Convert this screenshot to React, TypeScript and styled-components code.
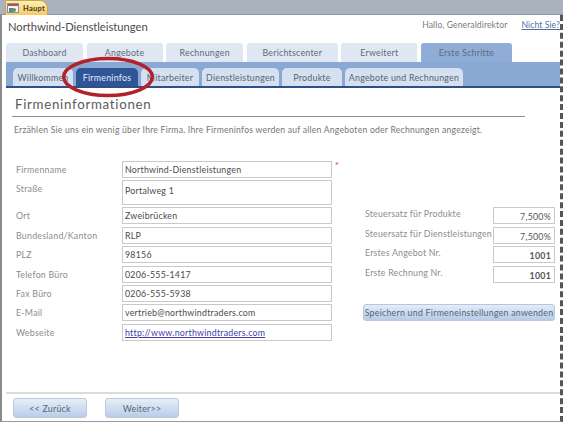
import React from 'react';
import styled, { createGlobalStyle } from 'styled-components';

const GlobalStyle = createGlobalStyle`
  html, body {
    margin: 0;
    padding: 0;
    background: #ffffff;
  }
  * {
    box-sizing: border-box;
  }
`

const mainTabs = [
  { label: 'Dashboard', width: 77 },
  { label: 'Angebote', width: 76 },
  { label: 'Rechnungen', width: 77 },
  { label: 'Berichtscenter', width: 91 },
  { label: 'Erweitert', width: 76 },
  { label: 'Erste Schritte', width: 91, active: true },
]

const subTabs = [
  { label: 'Willkommen', width: 60 },
  { label: 'Firmeninfos', width: 62, active: true },
  { label: 'Mitarbeiter', width: 58 },
  { label: 'Dienstleistungen', width: 77 },
  { label: 'Produkte', width: 60 },
  { label: 'Angebote und Rechnungen', width: 118 },
]

const companyFields = [
  { label: 'Firmenname', value: 'Northwind-Dienstleistungen', required: true },
  { label: 'Straße', value: 'Portalweg 1', tall: true },
  { label: 'Ort', value: 'Zweibrücken' },
  { label: 'Bundesland/Kanton', value: 'RLP' },
  { label: 'PLZ', value: '98156' },
  { label: 'Telefon Büro', value: '0206-555-1417' },
  { label: 'Fax Büro', value: '0206-555-5938' },
  { label: 'E-Mail', value: 'vertrieb@northwindtraders.com' },
  { label: 'Webseite', value: 'http://www.northwindtraders.com', link: true },
]

const taxFields = [
  { label: 'Steuersatz für Produkte', value: '7,500%' },
  { label: 'Steuersatz für Dienstleistungen', value: '7,500%' },
  { label: 'Erstes Angebot Nr.', value: '1001', bold: true },
  { label: 'Erste Rechnung Nr.', value: '1001', bold: true },
]

export default function App() {
  return (
    <Page>
      <GlobalStyle />
      <TopBar>
        <DocTab>
          <svg width="12" height="10" viewBox="0 0 12 10">
            <rect x="0.5" y="0.5" width="11" height="9" fill="#f4f6fa" stroke="#8c8f96" />
            <rect x="1" y="1" width="10" height="2" fill="#c0504d" />
            <rect x="2" y="5" width="4" height="4" fill="#4f81bd" />
            <circle cx="7" cy="7" r="2" fill="#6a9a4b" />
          </svg>
          Haupt
        </DocTab>
      </TopBar>
      <Body>
        <Header>
          <AppTitle>Northwind-Dienstleistungen</AppTitle>
          <Greeting>Hallo, Generaldirektor</Greeting>
          <NotYou>Nicht Sie?</NotYou>
        </Header>
        <MainTabs>
          {mainTabs.map((tab) => (
            <MainTab key={tab.label} $width={tab.width} $active={tab.active}>{tab.label}</MainTab>
          ))}
        </MainTabs>
        <SubBar>
          {subTabs.map((tab) => (
            <SubTab key={tab.label} $width={tab.width} $active={tab.active}>{tab.label}</SubTab>
          ))}
        </SubBar>
        <Content>
          <Heading>Firmeninformationen</Heading>
          <Intro>Erzählen Sie uns ein wenig über Ihre Firma. Ihre Firmeninfos werden auf allen Angeboten oder Rechnungen angezeigt.</Intro>
          <FormArea>
            <CompanyColumn>
              {companyFields.map((field) => (
                <Row key={field.label}>
                  <Label>{field.label}</Label>
                  <Input $tall={field.tall}>
                    {field.link ? <WebLink>{field.value}</WebLink> : field.value}
                  </Input>
                  {field.required && <Required>*</Required>}
                </Row>
              ))}
            </CompanyColumn>
            <TaxColumn>
              {taxFields.map((field) => (
                <Row key={field.label}>
                  <TaxLabel>{field.label}</TaxLabel>
                  <NumberInput $bold={field.bold}>{field.value}</NumberInput>
                </Row>
              ))}
              <SaveButton>Speichern und Firmeneinstellungen anwenden</SaveButton>
            </TaxColumn>
          </FormArea>
        </Content>
        <Footer>
          <NavButton>&lt;&lt; Zurück</NavButton>
          <NavButton>Weiter&gt;&gt;</NavButton>
        </Footer>
      </Body>
      <Highlight width="96" height="46" viewBox="0 0 96 46">
        <ellipse cx="48" cy="23" rx="44.3" ry="18.4" fill="none" stroke="#b3212b" strokeWidth="3.5" />
      </Highlight>
    </Page>
  )
}

const Page = styled.div`
  position: relative;
  width: 563px;
  height: 422px;
  overflow: hidden;
  display: flex;
  flex-direction: column;
  font-family: "Lato", "Open Sans", sans-serif;
  font-size: 8.8px;
  letter-spacing: 0.25px;
  color: #5f6368;
  background: #ffffff;
`

const TopBar = styled.div`
  height: 15px;
  flex: none;
  padding-left: 5px;
  background: #abb2bf;
  border-bottom: 1px solid #8f96a3;
`

const DocTab = styled.div`
  width: 43px;
  height: 15px;
  display: flex;
  align-items: center;
  gap: 4px;
  padding-left: 1px;
  font-size: 7.5px;
  font-weight: 700;
  color: #4a3a10;
  background: linear-gradient(#fdf0b4, #f5c968);
  border: 1px solid #c9a35a;
  border-bottom: none;
  border-radius: 2px 8px 0 0;
`

const Body = styled.div`
  flex: 1;
  display: flex;
  flex-direction: column;
  min-height: 0;
  border-left: 2px solid #8a8a8a;
  border-right: 3px dashed #555555;
  border-bottom: 1px solid #9a9a9a;
`

const Header = styled.div`
  height: 28px;
  flex: none;
  display: flex;
  align-items: center;
  padding: 0 0 5px 6px;
`

const AppTitle = styled.div`
  font-size: 11.2px;
  letter-spacing: 0;
  color: #4c4c4c;
  margin-right: auto;
`

const Greeting = styled.div`
  margin-bottom: 3px;
  font-size: 8.6px;
  letter-spacing: 0.1px;
  color: #7a7a7a;
`

const NotYou = styled.div`
  margin: 0 0 3px 14px;
  font-size: 8.6px;
  letter-spacing: 0.1px;
  color: #4f6f9f;
  text-decoration: underline;
`

const MainTabs = styled.div`
  height: 19px;
  flex: none;
  display: flex;
  gap: 3.6px;
  padding-left: 4px;
`

const MainTab = styled.div<{ $width: number, $active?: boolean }>`
  width: ${(p) => p.$width}px;
  display: flex;
  align-items: center;
  justify-content: center;
  color: #5f6a7a;
  background: ${(p) => (p.$active ? '#8fadd6' : '#dfe7f2')};
  border-radius: 3px 3px 0 0;
`

const SubBar = styled.div`
  height: 26px;
  flex: none;
  display: flex;
  align-items: flex-end;
  gap: 3px;
  margin-left: 4px;
  padding-left: 7px;
  background: #8aa9d2;
  border-bottom: 2px solid #2f4f86;
`

const SubTab = styled.div<{ $width: number, $active?: boolean }>`
  width: ${(p) => p.$width}px;
  height: 18px;
  display: flex;
  align-items: center;
  justify-content: center;
  white-space: nowrap;
  color: ${(p) => (p.$active ? '#e6edf7' : '#566375')};
  background: ${(p) => (p.$active ? '#2f5597' : '#d5e1f0')};
  border-radius: 5px 5px 0 0;
`

const Content = styled.div`
  flex: 1;
  min-height: 0;
  padding: 7px 0 0 10px;
`

const Heading = styled.div`
  width: 513px;
  height: 22px;
  padding-left: 3px;
  font-size: 13.3px;
  letter-spacing: 0.7px;
  line-height: 19px;
  color: #5b5b5b;
  border-bottom: 1px solid #8b8f96;
`

const Intro = styled.div`
  margin-top: 8px;
  padding-left: 2px;
  font-size: 8.6px;
  letter-spacing: 0.24px;
  color: #757575;
  white-space: nowrap;
`

const FormArea = styled.div`
  display: flex;
  margin-top: 25.7px;
  padding-left: 4px;
`

const CompanyColumn = styled.div`
  width: 349px;
  display: flex;
  flex-direction: column;
  gap: 2.4px;
`

const TaxColumn = styled.div`
  display: flex;
  flex-direction: column;
  gap: 2.4px;
  padding-top: 46.7px;
`

const Row = styled.div`
  position: relative;
  display: flex;
  align-items: flex-start;
`

const Label = styled.div`
  width: 106px;
  flex: none;
  padding-top: 3px;
  color: #8c8c8c;
`

const TaxLabel = styled.div`
  width: 128px;
  flex: none;
  padding-top: 1px;
  white-space: nowrap;
  letter-spacing: 0.2px;
  color: #8c8c8c;
`

const Input = styled.div<{ $tall?: boolean }>`
  width: 210px;
  height: ${(p) => (p.$tall ? '25px' : '17px')};
  flex: none;
  padding: ${(p) => (p.$tall ? '4px' : '2px')} 0 0 2px;
  line-height: 11px;
  color: #4a4a4a;
  background: #ffffff;
  border: 1px solid #c9c9c9;
`

const WebLink = styled.span`
  color: #4040a8;
  text-decoration: underline;
`

const Required = styled.span`
  margin-left: 3px;
  color: #d0304a;
  font-size: 9px;
  line-height: 9px;
`

const NumberInput = styled.div<{ $bold?: boolean }>`
  width: 62px;
  height: 17px;
  flex: none;
  padding: 3px 3px 0 0;
  text-align: right;
  line-height: 12px;
  font-weight: ${(p) => (p.$bold ? 700 : 400)};
  color: #555555;
  border: 1px solid #c9c9c9;
`

const SaveButton = styled.div`
  width: 192px;
  height: 17px;
  margin-top: 19px;
  margin-left: -2px;
  display: flex;
  align-items: center;
  justify-content: center;
  white-space: nowrap;
  color: #566375;
  background: linear-gradient(#e4edf8, #b6cbe7);
  border: 1px solid #b5c6de;
  border-radius: 3px;
`

const Footer = styled.div`
  height: 29px;
  flex: none;
  display: flex;
  gap: 18px;
  padding: 4px 0 0 7px;
  margin-left: 4px;
  border-top: 2px solid #dcdcdc;
`

const NavButton = styled.div`
  width: 74px;
  height: 20px;
  display: flex;
  align-items: center;
  justify-content: center;
  color: #5a6675;
  background: linear-gradient(#e6eef8, #b9cde8);
  border: 1px solid #bccbe0;
  border-radius: 3px;
`

const Highlight = styled.svg`
  position: absolute;
  left: 60px;
  top: 54px;
`
